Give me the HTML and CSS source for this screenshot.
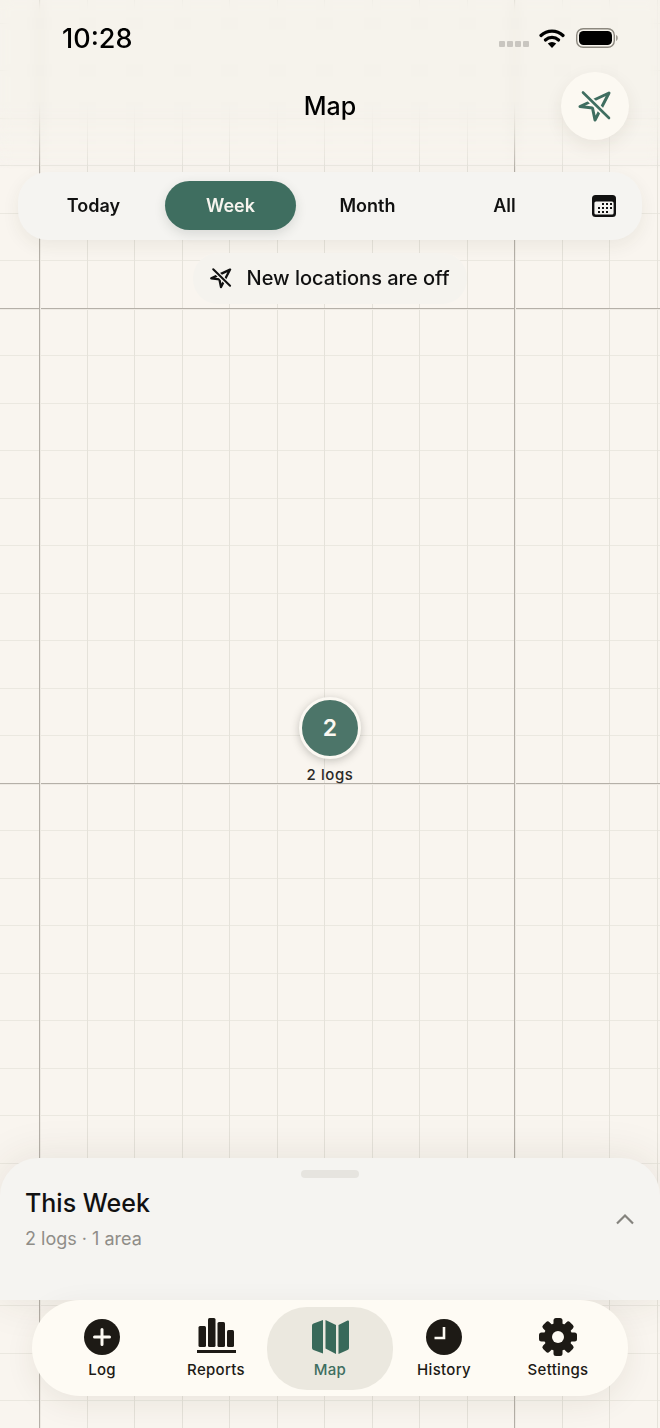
FILE: index.html
```html
<!DOCTYPE html>
<html lang="en">

<head>
    <meta charset="utf-8" />
    <title>Map</title>
    <link rel="stylesheet" href="styles.css">
</head>

<body>
    <div class="screen">
        <div class="top_blur"></div>

        <div class="status_bar">
            <span class="status_time">10:28</span>
            <div class="status_icons">
                <div class="signal_dots"><i></i><i></i><i></i><i></i></div>
                <svg class="wifi_icon" width="26" height="20" viewBox="0 0 26 20">
                    <path d="M2 7.5a16 16 0 0 1 22 0" fill="none" stroke="#000" stroke-width="3.2" stroke-linecap="round" />
                    <path d="M6.4 12a9.6 9.6 0 0 1 13.2 0" fill="none" stroke="#000" stroke-width="3.2" stroke-linecap="round" />
                    <path d="M13 20l-4.2-4.4a6 6 0 0 1 8.4 0z" fill="#000" />
                </svg>
                <svg class="battery_icon" width="42" height="20" viewBox="0 0 42 20">
                    <rect x="0.7" y="0.7" width="37.6" height="18.6" rx="6.5" fill="none" stroke="#8c887f" stroke-width="1.4" />
                    <rect x="3" y="3" width="33" height="14" rx="4.6" fill="#000" />
                    <path d="M40 7v6c1.2-.4 1.8-1.6 1.8-3s-.6-2.6-1.8-3z" fill="#a09c93" />
                </svg>
            </div>
        </div>

        <header class="title_row">
            <h1 class="page_title">Map</h1>
            <button class="locate_btn">
                <svg width="34" height="34" viewBox="0 0 34 34">
                    <path d="M31 4L2 17.5l12.5 1.5L17 31z" fill="none" stroke="#3f6e60" stroke-width="3" stroke-linejoin="round" />
                    <path d="M5 3.5L31 29" stroke="#fcf9f2" stroke-width="6" />
                    <path d="M5 3.5L31 29" stroke="#3f6e60" stroke-width="2.6" stroke-linecap="round" />
                </svg>
            </button>
        </header>

        <nav class="range_bar">
            <a class="range_item">Today</a>
            <a class="range_item range_active">Week</a>
            <a class="range_item">Month</a>
            <a class="range_item">All</a>
            <a class="range_cal">
                <svg width="24" height="22" viewBox="0 0 24 22">
                    <rect width="24" height="22" rx="3.5" fill="#111" />
                    <rect x="2.4" y="6.5" width="19.2" height="13" rx="1.6" fill="#f5f4f1" />
                    <g fill="#111">
                        <rect x="10" y="8" width="2" height="2" /><rect x="14" y="8" width="2" height="2" /><rect x="18" y="8" width="2" height="2" />
                        <rect x="6" y="12" width="2" height="2" /><rect x="10" y="12" width="2" height="2" /><rect x="14" y="12" width="2" height="2" /><rect x="18" y="12" width="2" height="2" />
                        <rect x="6" y="16" width="2" height="2" /><rect x="10" y="16" width="2" height="2" /><rect x="14" y="16" width="2" height="2" />
                    </g>
                </svg>
            </a>
        </nav>

        <div class="notice">
            <svg width="22" height="22" viewBox="0 0 34 34">
                <path d="M31 4L2 17.5l12.5 1.5L17 31z" fill="none" stroke="#111" stroke-width="3.6" stroke-linejoin="round" />
                <path d="M5 3.5L31 29" stroke="#f5f3ee" stroke-width="7" />
                <path d="M5 3.5L31 29" stroke="#111" stroke-width="3.2" stroke-linecap="round" />
            </svg>
            <span>New locations are off</span>
        </div>

        <div class="map_pin">
            <div class="pin_circle">2</div>
            <div class="pin_label">2 logs</div>
        </div>

        <section class="sheet">
            <div class="sheet_handle"></div>
            <div class="sheet_head">
                <div>
                    <h2 class="sheet_title">This Week</h2>
                    <p class="sheet_sub">2 logs · 1 area</p>
                </div>
                <svg class="sheet_chevron" width="20" height="12" viewBox="0 0 20 12">
                    <path d="M2 10.5L10 2.5l8 8" fill="none" stroke="#85837e" stroke-width="2.2" />
                </svg>
            </div>
        </section>

        <nav class="tab_bar">
            <a class="tab_item">
                <svg width="40" height="40" viewBox="0 0 40 40">
                    <circle cx="20" cy="20" r="18" fill="#1d1a15" />
                    <path d="M20 12.5v15M12.5 20h15" stroke="#fefbf4" stroke-width="3" stroke-linecap="round" />
                </svg>
                <span>Log</span>
            </a>
            <a class="tab_item">
                <svg width="40" height="40" viewBox="0 0 40 40">
                    <g fill="#1d1a15">
                        <rect x="2.5" y="9" width="7.5" height="21" rx="1.5" />
                        <rect x="12" y="1" width="7.5" height="29" rx="1.5" />
                        <rect x="21.5" y="5" width="7.5" height="25" rx="1.5" />
                        <rect x="31" y="13" width="7" height="17" rx="1.5" />
                        <rect x="1" y="33" width="39" height="3" />
                    </g>
                </svg>
                <span>Reports</span>
            </a>
            <a class="tab_item tab_active">
                <svg width="40" height="40" viewBox="0 0 40 40">
                    <g fill="#38695a">
                        <path d="M13 3v33.5l-9.5-3.5q-1.5-.5-1.5-2V8.500q0-1.500 1.500-2z" />
                        <path d="M15.500 3l10.500 5v29l-10.500-5.500z" />
                        <path d="M28.500 8l9-4.500q1.500-.5 1.500 1V31q0 1.500-1.500 2l-9 4z" />
                    </g>
                </svg>
                <span>Map</span>
            </a>
            <a class="tab_item">
                <svg width="40" height="40" viewBox="0 0 40 40">
                    <circle cx="20" cy="20" r="18" fill="#1d1a15" />
                    <path d="M20 10v11H10.500" fill="none" stroke="#fefbf4" stroke-width="2.600" />
                </svg>
                <span>History</span>
            </a>
            <a class="tab_item">
                <svg width="40" height="40" viewBox="0 0 40 40">
                    <g fill="#1d1a15">
                        <circle cx="20" cy="20" r="14" />
                        <rect x="15.500" y="1" width="9" height="38" rx="2.500" />
                        <rect x="15.500" y="1" width="9" height="38" rx="2.500" transform="rotate(45 20 20)" />
                        <rect x="15.500" y="1" width="9" height="38" rx="2.500" transform="rotate(90 20 20)" />
                        <rect x="15.500" y="1" width="9" height="38" rx="2.500" transform="rotate(135 20 20)" />
                    </g>
                    <circle cx="20" cy="20" r="6" fill="#fefbf4" />
                </svg>
                <span>Settings</span>
            </a>
        </nav>
    </div>
</body>

</html>
```

FILE: styles.css
```css
* {
    box-sizing: border-box;
}

body {
    margin: 0;
    font-family: Inter, "Noto Sans", sans-serif;
    color: #111;
}

h1,
h2,
p {
    margin: 0;
}

.screen {
    position: relative;
    width: 660px;
    height: 1428px;
    overflow: hidden;
    display: flex;
    flex-direction: column;
    background-color: #f9f5ef;
    background-image:
        repeating-linear-gradient(90deg, transparent 0 39px, #b5b0a8 39px 40px, #eeeae3 40px 41px, transparent 41px 475px),
        repeating-linear-gradient(180deg, transparent 0 308px, #b5b0a8 308px 309px, #eeeae3 309px 310px, transparent 310px 475px),
        repeating-linear-gradient(90deg, transparent 0 39px, #e5e2da 39px 40px, transparent 40px 87px, #e5e2da 87px 88px, transparent 88px 95px),
        repeating-linear-gradient(180deg, transparent 0 23px, #ebe8e0 23px 24px, transparent 24px 70px, #ebe8e0 70px 71px, transparent 71px 95px);
}

.top_blur {
    position: absolute;
    top: 0;
    left: 0;
    right: 0;
    height: 170px;
    backdrop-filter: blur(6px);
    mask-image: linear-gradient(to bottom, #000 60%, transparent 100%);
    background: rgba(244, 241, 234, 0.5);
}

/* status bar */
.status_bar {
    position: relative;
    height: 72px;
    padding: 23px 42px 0 62px;
    display: flex;
    justify-content: space-between;
    align-items: flex-start;
}

.status_time {
    font-size: 27px;
    font-weight: 500;
    line-height: 32px;
    color: #000;
}

.status_icons {
    display: flex;
    align-items: center;
    gap: 11px;
    padding-top: 5px;
}

.signal_dots {
    display: flex;
    gap: 2px;
    margin-top: 12px;
    margin-right: -1px;
}

.signal_dots i {
    width: 6px;
    height: 6px;
    border-radius: 1px;
    background-color: #c9c6c0;
}

/* title */
.title_row {
    position: relative;
    height: 68px;
    display: flex;
    align-items: center;
    justify-content: center;
}

.page_title {
    font-size: 25px;
    font-weight: 500;
    color: #000;
}

.locate_btn {
    position: absolute;
    top: 0;
    right: 31px;
    width: 68px;
    height: 68px;
    padding: 0;
    border: none;
    border-radius: 50%;
    background-color: #fcf9f2;
    box-shadow: 0 6px 18px rgba(60, 50, 30, 0.08);
    display: flex;
    align-items: center;
    justify-content: center;
}

/* range filter */
.range_bar {
    position: relative;
    margin: 32px 18px 0;
    height: 68px;
    padding: 0 10px 2px;
    display: flex;
    align-items: center;
    gap: 6px;
    background-color: #f5f4f1;
    border-radius: 30px;
    box-shadow: 0 6px 18px rgba(60, 50, 30, 0.07);
}

.range_item {
    width: 131px;
    height: 49px;
    display: flex;
    align-items: center;
    justify-content: center;
    font-size: 18px;
    font-weight: 600;
    border-radius: 24.5px;
}

.range_active {
    background-color: #3f6e60;
    color: #f6f4ee;
    box-shadow: 0 4px 12px rgba(40, 60, 50, 0.14);
}

.range_cal {
    width: 56px;
    margin-top: 2px;
    display: flex;
    justify-content: center;
}

/* notice */
.notice {
    position: relative;
    align-self: center;
    margin-top: 13px;
    height: 51px;
    padding: 0 18px 2px 17px;
    display: flex;
    align-items: center;
    gap: 15px;
    font-size: 20px;
    font-weight: 500;
    background-color: #f5f3ee;
    border-radius: 25px;
}

/* marker on the map */
.map_pin {
    position: absolute;
    left: 270px;
    top: 697px;
    width: 120px;
    display: flex;
    flex-direction: column;
    align-items: center;
    gap: 7px;
}

.pin_circle {
    width: 62px;
    height: 62px;
    border: 3px solid #fbf8f2;
    border-radius: 50%;
    background-color: #4c7569;
    color: #fbf8f2;
    font-size: 23px;
    font-weight: 600;
    display: flex;
    align-items: center;
    justify-content: center;
    box-shadow: 0 2px 8px rgba(40, 40, 30, 0.25);
}

.pin_label {
    font-size: 15px;
    font-weight: 500;
    letter-spacing: 0.6px;
    line-height: 18px;
    color: #2c2a27;
}

/* bottom sheet */
.sheet {
    position: absolute;
    left: 0;
    right: 0;
    top: 1158px;
    height: 142px;
    padding-top: 12px;
    background-color: #f5f4f1;
    border-radius: 38px 38px 0 0;
    box-shadow: 0 0 44px rgba(60, 50, 30, 0.1);
}

.sheet_handle {
    width: 58px;
    height: 8px;
    margin: 0 auto;
    border-radius: 4px;
    background-color: #e6e4df;
}

.sheet_head {
    display: flex;
    justify-content: space-between;
    align-items: center;
    padding: 9px 25px 0;
}

.sheet_title {
    font-size: 25px;
    font-weight: 500;
    line-height: 32px;
}

.sheet_sub {
    margin-top: 8px;
    font-size: 18px;
    line-height: 24px;
    color: #8f8d88;
}

/* tabs */
.tab_bar {
    position: absolute;
    left: 32px;
    top: 1300px;
    width: 596px;
    height: 96px;
    padding: 0 12px 0 13px;
    display: flex;
    align-items: center;
    background-color: #fefbf4;
    border-radius: 48px;
    box-shadow: 0 8px 30px rgba(60, 50, 30, 0.08);
}

.tab_item {
    position: relative;
    width: 114px;
    display: flex;
    flex-direction: column;
    align-items: center;
    gap: 3px;
    font-size: 15px;
    font-weight: 500;
    letter-spacing: 0.3px;
    line-height: 20px;
    color: #1d1a15;
}

.tab_active {
    width: 126px;
    height: 83px;
    margin: 0 -6px;
    padding-top: 10px;
    border-radius: 40px;
    background-color: #ebe8df;
    color: #3f6e60;
}
```
